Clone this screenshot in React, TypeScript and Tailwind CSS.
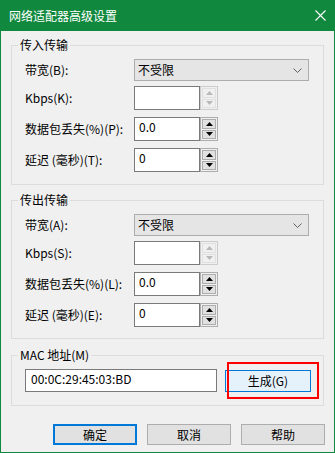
import React from "react";

const FONT = { fontFamily: '"Noto Sans CJK SC", "Microsoft YaHei", sans-serif' };

function Combo() {
  return (
    <div className="w-[175px] h-[22px] bg-[#e5e5e5] border border-[#adadad] flex items-center justify-between pl-[3px] pr-[6px] text-[12px] text-black">
      <span>不受限</span>
      <svg width="9" height="5" viewBox="0 0 9 5">
        <path d="M0.5 0.5 L4.5 4.5 L8.5 0.5" stroke="#606060" fill="none" strokeWidth="1" />
      </svg>
    </div>
  );
}

function Arrow({ up, color }: { up: boolean; color: string }) {
  return (
    <svg width="7" height="4" viewBox="0 0 7 4">
      {up ? <path d="M0 4 L3.5 0 L7 4 Z" fill={color} /> : <path d="M0 0 L3.5 4 L7 0 Z" fill={color} />}
    </svg>
  );
}

function Spin({ value, disabled }: { value: string; disabled?: boolean }) {
  const c = disabled ? "#b8b8b8" : "#000000";
  return (
    <div className="flex h-[24px]">
      <div className="w-[66px] h-full bg-white border border-[#7a7a7a] text-[12px] text-black pl-[4px] leading-[18px]">
        {value}
      </div>
      <div
        className={
          "w-[18px] h-full border flex flex-col gap-[1px] p-[1px] bg-[#f0f0f0] " +
          (disabled ? "border-[#cccccc]" : "border-[#adadad]")
        }
      >
        <div
          className={
            "flex-1 flex items-center justify-center border " +
            (disabled ? "border-[#e0e0e0] bg-[#f0f0f0]" : "border-[#adadad] bg-[#e1e1e1]")
          }
        >
          <Arrow up color={c} />
        </div>
        <div
          className={
            "flex-1 flex items-center justify-center border " +
            (disabled ? "border-[#e0e0e0] bg-[#f0f0f0]" : "border-[#adadad] bg-[#e1e1e1]")
          }
        >
          <Arrow up={false} color={c} />
        </div>
      </div>
    </div>
  );
}

function Row({ label, children, h, mt }: { label: string; children: React.ReactNode; h: string; mt?: string }) {
  return (
    <div className={"flex items-center " + h + " " + (mt ?? "")}>
      <div className="w-[109px] text-[12px] text-black whitespace-nowrap">{label}</div>
      {children}
    </div>
  );
}

function Group({
  title,
  children,
  className,
}: {
  title: string;
  children: React.ReactNode;
  className: string;
}) {
  return (
    <div className={"relative border border-[#dcdcdc] " + className}>
      <span className="absolute left-[6px] top-[-10px] px-[2px] bg-[#f0f0f0] text-[12px] leading-[18px] text-black">
        {title}
      </span>
      {children}
    </div>
  );
}

function TransferGroup({
  title,
  keys,
  className,
}: {
  title: string;
  keys: [string, string, string, string];
  className: string;
}) {
  return (
    <Group title={title} className={className}>
      <div className="pl-[13px] pt-[13px] flex flex-col">
        <Row label={`带宽(${keys[0]}):`} h="h-[22px]">
          <Combo />
        </Row>
        <Row label={`Kbps(${keys[1]}):`} h="h-[24px]" mt="mt-[5px]">
          <Spin value="" disabled />
        </Row>
        <Row label={`数据包丢失(%)(${keys[2]}):`} h="h-[24px]" mt="mt-[7px]">
          <Spin value="0.0" />
        </Row>
        <Row label={`延迟 (毫秒)(${keys[3]}):`} h="h-[24px]" mt="mt-[7px]">
          <Spin value="0" />
        </Row>
      </div>
    </Group>
  );
}

export default function App() {
  return (
    <div
      style={FONT}
      className="w-[335px] h-[453px] bg-[#f0f0f0] border-x border-b border-[#10893e] flex flex-col"
    >
      <div className="h-[31px] bg-[#10893e] flex items-center justify-between pl-[9px] pr-[9px] -mx-[1px] shrink-0">
        <span className="text-white text-[12px]">网络适配器高级设置</span>
        <svg width="11" height="11" viewBox="0 0 11 11">
          <path d="M0.5 0.5 L10.5 10.5 M10.5 0.5 L0.5 10.5" stroke="#ffffff" strokeWidth="1.1" />
        </svg>
      </div>
      <div className="px-[10px] flex flex-col">
        <TransferGroup title="传入传输" keys={["B", "K", "P", "T"]} className="mt-[14px] h-[140px]" />
        <TransferGroup title="传出传输" keys={["A", "S", "L", "E"]} className="mt-[15px] h-[139px]" />
        <Group title="MAC 地址(M)" className="mt-[16px] h-[51px]">
          <div className="pl-[13px] pt-[13px] flex items-center gap-[8px]">
            <div className="w-[192px] h-[23px] bg-white border border-[#7a7a7a] text-[12px] text-black pl-[5px] leading-[18px]">
              00:0C:29:45:03:BD
            </div>
            <div className="relative">
              <div className="w-[86px] h-[22px] bg-[#e5f1fb] border border-[#0078d7] flex items-center justify-center text-[12px] text-black">
                生成(G)
              </div>
              <div className="absolute left-[2px] top-[-8px] w-[92px] h-[37px] border-2 border-[#ff0000]" />
            </div>
          </div>
        </Group>
        <div className="mt-[18px] flex justify-end gap-[10px] -mr-[1px]">
          <div className="w-[84px] h-[21px] bg-[#e1e1e1] border-2 border-[#0078d7] flex items-center justify-center text-[12px] text-black">
            确定
          </div>
          <div className="w-[84px] h-[21px] bg-[#e1e1e1] border border-[#adadad] flex items-center justify-center text-[12px] text-black">
            取消
          </div>
          <div className="w-[84px] h-[21px] bg-[#e1e1e1] border border-[#adadad] flex items-center justify-center text-[12px] text-black">
            帮助
          </div>
        </div>
      </div>
    </div>
  );
}
